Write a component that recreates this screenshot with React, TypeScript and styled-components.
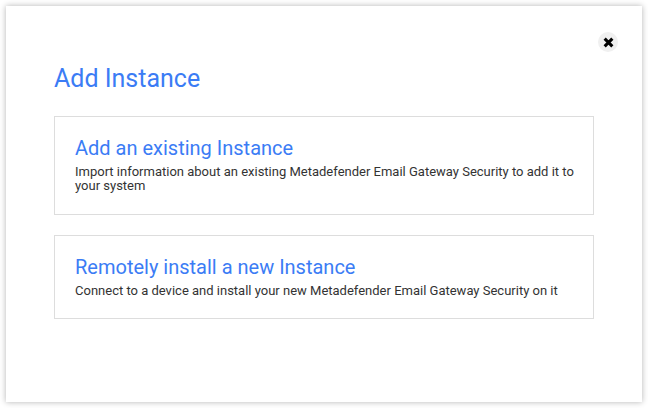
import React from "react";
import styled, { createGlobalStyle } from "styled-components";

const Global = createGlobalStyle`
  html, body { margin: 0; padding: 0; background: #ffffff; }
  body { font-family: Roboto, "Noto Sans", Arial, sans-serif; }
  * { box-sizing: border-box; }
`;

const Page = styled.div`
  width: 648px;
  height: 408px;
  padding: 6px;
  background: #ffffff;
`;

const Modal = styled.div`
  position: relative;
  width: 636px;
  height: 396px;
  background: #ffffff;
  box-shadow: 0 0 6px rgba(0, 0, 0, 0.3);
  padding: 58px 48px 0 48px;
`;

const CloseButton = styled.button`
  position: absolute;
  top: 26px;
  right: 24px;
  width: 20px;
  height: 20px;
  border-radius: 50%;
  border: none;
  background: #f0f0f0;
  padding: 0;
  display: flex;
  align-items: center;
  justify-content: center;
  cursor: pointer;
`;

const Title = styled.h1`
  margin: 0 0 22px 0;
  font-family: Roboto, sans-serif;
  font-weight: 400;
  font-size: 25px;
  line-height: 30px;
  color: #3b7cf5;
`;

const List = styled.div`
  display: flex;
  flex-direction: column;
  gap: 20px;
`;

const Card = styled.div`
  border: 1px solid #dddddd;
  padding: 18px 14px 20px 20px;
  cursor: pointer;
`;

const CardTitle = styled.div`
  font-family: Roboto, sans-serif;
  font-size: 20px;
  line-height: 26px;
  color: #3b7cf5;
  margin-bottom: 4px;
`;

const CardText = styled.div`
  font-family: Roboto, sans-serif;
  font-size: 13px;
  line-height: 14.3px;
  color: #333333;
`;

export default function App() {
  return (
    <>
      <Global />
      <Page>
        <Modal>
          <CloseButton aria-label="Close">
            <svg width="11" height="11" viewBox="0 0 10 10">
              <path d="M1.5 1.5 L8.5 8.5 M8.5 1.5 L1.5 8.5" stroke="#000" strokeWidth="2.8" strokeLinecap="butt" />
            </svg>
          </CloseButton>
          <Title>Add Instance</Title>
          <List>
            <Card>
              <CardTitle>Add an existing Instance</CardTitle>
              <CardText>
                Import information about an existing Metadefender Email Gateway Security to add it to your system
              </CardText>
            </Card>
            <Card>
              <CardTitle>Remotely install a new Instance</CardTitle>
              <CardText>
                Connect to a device and install your new Metadefender Email Gateway Security on it
              </CardText>
            </Card>
          </List>
        </Modal>
      </Page>
    </>
  );
}
